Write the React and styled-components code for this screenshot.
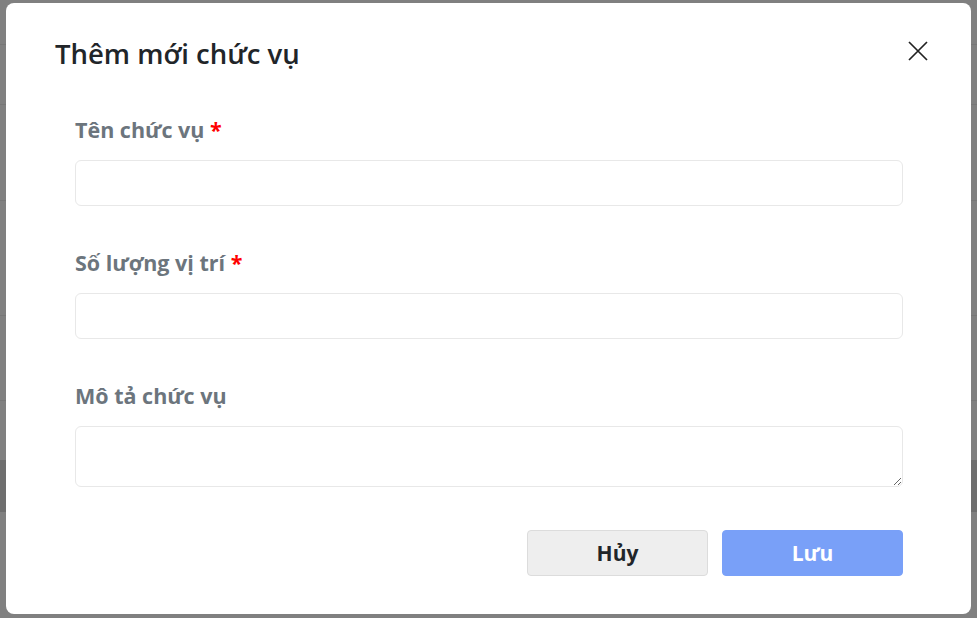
import React from "react";
import styled, { createGlobalStyle } from "styled-components";

const Global = createGlobalStyle`
  html, body { margin: 0; padding: 0; }
  body {
    background: #7f7f7f;
    font-family: "Open Sans", "Noto Sans", sans-serif;
    width: 977px;
    height: 618px;
    overflow: hidden;
  }
  * { box-sizing: border-box; }
`;

const Backdrop = styled.div`
  width: 977px;
  height: 618px;
  padding: 3px 6px 0 6px;
  background:
    linear-gradient(#777 0 0) 0 44px / 100% 1px no-repeat,
    linear-gradient(#777 0 0) 0 104px / 100% 1px no-repeat,
    linear-gradient(#777 0 0) 0 200px / 100% 1px no-repeat,
    linear-gradient(#777 0 0) 0 315px / 100% 1px no-repeat,
    linear-gradient(#777 0 0) 0 400px / 100% 1px no-repeat,
    linear-gradient(#6e6e6e 0 0) 0 460px / 100% 52px no-repeat,
    #808080;
`;

const Modal = styled.div`
  width: 965px;
  height: 611px;
  background: #fff;
  border-radius: 8px;
  padding: 33px 42px 38px 49px;
  display: flex;
  flex-direction: column;
`;

const Header = styled.div`
  display: flex;
  align-items: center;
  justify-content: space-between;
`;

const Title = styled.h2`
  margin: 0;
  font-size: 27.5px;
  line-height: 36px;
  font-weight: 600;
  color: #212529;
`;

const CloseButton = styled.button`
  border: 0;
  background: transparent;
  padding: 0;
  width: 22px;
  height: 22px;
  margin-top: -6px;
  display: flex;
  align-items: center;
  justify-content: center;
  cursor: pointer;
  color: #222;
`;

const Form = styled.form`
  display: flex;
  flex-direction: column;
  padding: 0 26px 0 20px;
  margin-top: 44px;
`;

const Field = styled.div`
  display: flex;
  flex-direction: column;
  margin-bottom: ${(p) => p.$gap}px;
`;

const Label = styled.label`
  font-size: 21.5px;
  line-height: 27px;
  font-weight: 700;
  color: #6c757d;
  margin-bottom: 17px;
`;

const Required = styled.span`
  color: #ff0000;
`;

const Input = styled.input`
  height: 46px;
  border: 1px solid #e8e8e8;
  border-radius: 6px;
  font-family: inherit;
  font-size: 16px;
  padding: 0 12px;
  outline: none;
`;

const TextArea = styled.textarea`
  height: 61px;
  border: 1px solid #e8e8e8;
  border-radius: 6px;
  font-family: inherit;
  font-size: 16px;
  padding: 8px 12px;
  outline: none;
  resize: vertical;
`;

const Actions = styled.div`
  display: flex;
  justify-content: flex-end;
  gap: 14px;
`;

const Button = styled.button`
  width: 181px;
  height: 46px;
  border-radius: 4px;
  font-family: inherit;
  font-size: 21px;
  font-weight: 700;
  cursor: pointer;
  border: 1px solid ${(p) => (p.$primary ? "#79a0f8" : "#dcdcdc")};
  background: ${(p) => (p.$primary ? "#79a0f8" : "#eeeeee")};
  color: ${(p) => (p.$primary ? "#ffffff" : "#212529")};
`;

export default function App() {
  return (
    <>
      <Global />
      <Backdrop>
        <Modal>
          <Header>
            <Title>Thêm mới chức vụ</Title>
            <CloseButton type="button" aria-label="Đóng">
              <svg width="20" height="20" viewBox="0 0 20 20">
                <path d="M1 1 L19 19 M19 1 L1 19" stroke="currentColor" strokeWidth="1.7" fill="none" />
              </svg>
            </CloseButton>
          </Header>
          <Form onSubmit={(e) => e.preventDefault()}>
            <Field $gap={43}>
              <Label>
                Tên chức vụ <Required>*</Required>
              </Label>
              <Input type="text" />
            </Field>
            <Field $gap={43}>
              <Label>
                Số lượng vị trí <Required>*</Required>
              </Label>
              <Input type="text" />
            </Field>
            <Field $gap={43}>
              <Label>Mô tả chức vụ</Label>
              <TextArea />
            </Field>
            <Actions>
              <Button type="button">Hủy</Button>
              <Button type="submit" $primary>
                Lưu
              </Button>
            </Actions>
          </Form>
        </Modal>
      </Backdrop>
    </>
  );
}
